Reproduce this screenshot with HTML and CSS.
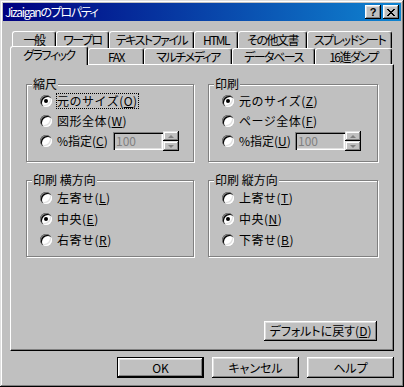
FILE: index.html
```html
<!DOCTYPE html>
<html lang="ja">
<head>
    <meta charset="UTF-8">
    <title>Jizaiganのプロパティ</title>
    <link rel="stylesheet" href="styles.css">
</head>
<body>
    <div class="window">
        <div class="titlebar">
            <span class="title">Jizaiganのプロパティ</span>
            <span class="title-btn help">?</span>
            <span class="title-btn close">
                <svg width="8" height="7" viewBox="0 0 8 7"><path d="M0 0h2v1H0zM6 0h2v1H6zM1 1h2v1H1zM5 1h2v1H5zM2 2h4v1H2zM3 3h2v1H3zM2 4h4v1H2zM1 5h2v1H1zM5 5h2v1H5zM0 6h2v1H0zM6 6h2v1H6z" fill="#000"/></svg>
            </span>
        </div>

        <div class="content">
            <!-- tab rows: back row first, front row holds the selected tab -->
            <div class="tab-row back">
                <span class="tab">一般</span>
                <span class="tab">ワープロ</span>
                <span class="tab">テキストファイル</span>
                <span class="tab">HTML</span>
                <span class="tab">その他文書</span>
                <span class="tab">スプレッドシート</span>
            </div>
            <div class="tab-row front">
                <span class="tab selected">グラフィック</span>
                <span class="tab">FAX</span>
                <span class="tab">マルチメディア</span>
                <span class="tab">データベース</span>
                <span class="tab">16進ダンプ</span>
            </div>

            <div class="panel">
                <div class="groups">
                    <div class="group">
                        <div class="group-title">縮尺</div>
                        <div class="option"><span class="radio checked"></span><span class="label focus">元のサイズ(<u>O</u>)</span></div>
                        <div class="option"><span class="radio"></span><span class="label">図形全体(<u>W</u>)</span></div>
                        <div class="option">
                            <span class="radio"></span><span class="label pct">%指定(<u>C</u>)</span>
                            <span class="spin">
                                <span class="spin-input">100</span>
                                <span class="spin-btns"><span class="spin-btn up"></span><span class="spin-btn down"></span></span>
                            </span>
                        </div>
                    </div>

                    <div class="group">
                        <div class="group-title">印刷</div>
                        <div class="option"><span class="radio checked"></span><span class="label">元のサイズ(<u>Z</u>)</span></div>
                        <div class="option"><span class="radio"></span><span class="label">ページ全体(<u>F</u>)</span></div>
                        <div class="option">
                            <span class="radio"></span><span class="label pct">%指定(<u>U</u>)</span>
                            <span class="spin">
                                <span class="spin-input">100</span>
                                <span class="spin-btns"><span class="spin-btn up"></span><span class="spin-btn down"></span></span>
                            </span>
                        </div>
                    </div>

                    <div class="group lower">
                        <div class="group-title">印刷 横方向</div>
                        <div class="option"><span class="radio"></span><span class="label">左寄せ(<u>L</u>)</span></div>
                        <div class="option"><span class="radio checked"></span><span class="label">中央(<u>E</u>)</span></div>
                        <div class="option"><span class="radio"></span><span class="label">右寄せ(<u>R</u>)</span></div>
                    </div>

                    <div class="group lower">
                        <div class="group-title">印刷 縦方向</div>
                        <div class="option"><span class="radio"></span><span class="label">上寄せ(<u>T</u>)</span></div>
                        <div class="option"><span class="radio checked"></span><span class="label">中央(<u>N</u>)</span></div>
                        <div class="option"><span class="radio"></span><span class="label">下寄せ(<u>B</u>)</span></div>
                    </div>
                </div>

                <div class="panel-foot">
                    <button class="btn btn-reset">デフォルトに戻す(<u>D</u>)</button>
                </div>
            </div>

            <div class="actions">
                <button class="btn default">OK</button>
                <button class="btn">キャンセル</button>
                <button class="btn">ヘルプ</button>
            </div>
        </div>
    </div>
</body>
</html>
```

FILE: styles.css
```css
body {
    margin: 0;
    background: #c0c0c0;
    font-family: "Noto Sans CJK JP", "Noto Sans", sans-serif;
    font-size: 12px;
    line-height: 1;
    color: #000;
}
u {
    text-underline-offset: 1px;
}
.window {
    width: 404px;
    height: 387px;
    box-sizing: border-box;
    padding: 3px;
    background: #c0c0c0;
    box-shadow: inset -1px -1px #000, inset 1px 1px #dfdfdf, inset -2px -2px #808080, inset 2px 2px #fff;
}
.titlebar {
    display: flex;
    align-items: center;
    height: 18px;
    padding: 0 2px;
    background: linear-gradient(to right, #000080, #1084d0);
    color: #fff;
}
.title {
    flex: 1;
    font-feature-settings: "palt" 1;
    letter-spacing: -1.3px;
}
.title-btn {
    width: 16px;
    height: 14px;
    box-sizing: border-box;
    display: grid;
    place-items: center;
    background: #c0c0c0;
    color: #000;
    font: bold 11px "Liberation Sans", sans-serif;
    box-shadow: inset -1px -1px #000, inset 1px 1px #fff, inset -2px -2px #808080, inset 2px 2px #dfdfdf;
}
.title-btn.help {
    margin-right: 2px;
}
.title-btn svg {
    display: block;
}
.content {
    margin: 10px 7px 0;
}

/* tabs */
.tab-row {
    display: flex;
}
.tab-row.back {
    height: 17px;
    padding-left: 2px;
}
.tab-row.front {
    height: 16px;
}
.tab {
    box-sizing: border-box;
    height: 100%;
    display: flex;
    align-items: center;
    justify-content: center;
    border: 1px solid;
    border-color: #fff #000 transparent #fff;
    border-bottom: none;
    border-radius: 3px 3px 0 0;
    box-shadow: inset -1px 0 #808080;
    background: #c0c0c0;
    white-space: nowrap;
    font-feature-settings: "palt" 1;
    letter-spacing: -1.5px;
}
.back .tab:nth-child(1) { width: 44px; }
.back .tab:nth-child(2) { width: 53px; }
.back .tab:nth-child(3) { width: 85px; }
.back .tab:nth-child(4) { width: 44px; }
.back .tab:nth-child(5) { width: 69px; }
.back .tab:nth-child(6) { width: 85px; }
.front .tab:nth-child(1) { width: 78px; }
.front .tab:nth-child(2) { width: 56px; }
.front .tab:nth-child(3) { width: 88px; }
.front .tab:nth-child(4) { width: 83px; }
.front .tab:nth-child(5) { width: 77px; }
.tab.selected {
    position: relative;
    z-index: 1;
    height: 19px;
    margin-top: -2px;
    padding-bottom: 3px;
}

/* page */
.panel {
    box-sizing: border-box;
    height: 287px;
    display: flex;
    flex-direction: column;
    padding: 19px 16px 9px 15px;
    border: 1px solid;
    border-color: #fff #000 #000 #fff;
    box-shadow: inset -1px -1px #808080;
}
.groups {
    display: grid;
    grid-template-columns: 168px 170px;
    column-gap: 14px;
    row-gap: 18px;
}
.group {
    border: 1px solid #808080;
    box-shadow: inset 1px 1px #fff, 1px 1px #fff;
    padding: 0 0 10px 13px;
}
.group.lower {
    padding-bottom: 6px;
}
.group-title {
    display: table;
    margin: -8px 0 0 -8px;
    padding: 0 1px;
    line-height: 14px;
    background: #c0c0c0;
}
.option {
    display: flex;
    align-items: center;
    height: 20px;
}
.lower .option {
    height: 21px;
}
.radio {
    flex: none;
    width: 12px;
    height: 12px;
    border-radius: 50%;
    background: #fff;
    display: grid;
    place-items: center;
    box-shadow: inset 1px 1px #808080, inset 2px 2px #000, inset -1px -1px #fff, inset -2px -2px #dfdfdf;
}
.radio.checked::after {
    content: "";
    width: 4px;
    height: 4px;
    border-radius: 50%;
    background: #000;
}
.label {
    margin-left: 4px;
    padding: 1px 0;
    line-height: 12px;
    letter-spacing: 0.5px;
    border: 1px dotted transparent;
    white-space: nowrap;
}
.label.focus {
    border-color: #000;
}
.label.pct {
    flex: none;
    width: 57px;
    box-sizing: border-box;
    letter-spacing: 0;
}
.spin {
    display: flex;
    align-items: center;
}
.spin-input {
    width: 50px;
    height: 18px;
    box-sizing: border-box;
    display: flex;
    align-items: center;
    padding-left: 3px;
    color: #808080;
    box-shadow: inset 1px 1px #808080, inset 2px 2px #000, inset -1px -1px #fff, inset -2px -2px #dfdfdf;
}
.spin-btns {
    display: flex;
    flex-direction: column;
}
.spin-btn {
    width: 16px;
    height: 10px;
    box-sizing: border-box;
    display: grid;
    place-items: center;
    box-shadow: inset -1px -1px #000, inset 1px 1px #dfdfdf, inset -2px -2px #808080, inset 2px 2px #fff;
}
.spin-btn::after {
    content: "";
    border: solid transparent;
}
.spin-btn.up::after {
    border-width: 0 3px 3px;
    border-bottom-color: #808080;
}
.spin-btn.down::after {
    border-width: 3px 3px 0;
    border-top-color: #808080;
}
.panel-foot {
    margin-top: auto;
    display: flex;
    justify-content: flex-end;
}

/* buttons */
.btn {
    font: inherit;
    font-feature-settings: "palt" 1;
    color: #000;
    background: #c0c0c0;
    border: 0;
    padding: 0;
    box-shadow: inset -1px -1px #000, inset 1px 1px #fff, inset -2px -2px #808080, inset 2px 2px #dfdfdf;
}
.btn-reset {
    width: 113px;
    height: 20px;
}
.actions {
    display: flex;
    justify-content: flex-end;
    gap: 8px;
    margin-top: 6px;
}
.actions .btn {
    width: 87px;
    height: 21px;
}
.btn.default {
    box-shadow: inset 0 0 0 1px #000, inset -2px -2px #000, inset 2px 2px #fff, inset -3px -3px #808080, inset 3px 3px #dfdfdf;
}
```
